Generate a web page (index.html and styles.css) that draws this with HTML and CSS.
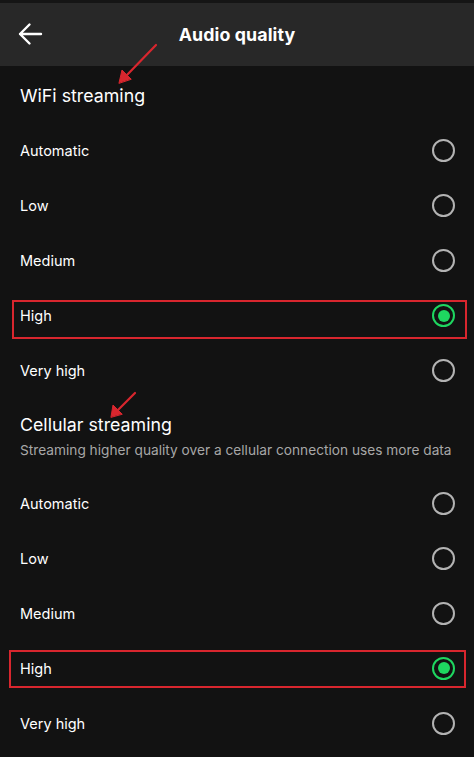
FILE: index.html
```html
<!DOCTYPE html>
<html lang="en">
<head>
  <meta charset="UTF-8">
  <meta name="viewport" content="width=device-width, initial-scale=1.0">
  <title>Audio quality</title>
  <link rel="stylesheet" href="styles.css">
</head>
<body>
  <div class="screen">
    <header class="topbar">
      <button class="back" aria-label="Back">
        <svg width="26" height="26" viewBox="0 0 26 26">
          <path d="M24 13H3M12.5 3.5L3 13l9.5 9.5" fill="none" stroke="#fff" stroke-width="2.4" stroke-linecap="round" stroke-linejoin="round"/>
        </svg>
      </button>
      <h1>Audio quality</h1>
    </header>

    <section class="group">
      <div class="group-head wifi">
        <h2>WiFi streaming</h2>
      </div>
      <div class="option"><span>Automatic</span><i class="radio"></i></div>
      <div class="option"><span>Low</span><i class="radio"></i></div>
      <div class="option"><span>Medium</span><i class="radio"></i></div>
      <div class="option"><span>High</span><i class="radio on"></i></div>
      <div class="option"><span>Very high</span><i class="radio"></i></div>
    </section>

    <section class="group">
      <div class="group-head cell">
        <h2>Cellular streaming</h2>
        <p>Streaming higher quality over a cellular connection uses more data</p>
      </div>
      <div class="option"><span>Automatic</span><i class="radio"></i></div>
      <div class="option"><span>Low</span><i class="radio"></i></div>
      <div class="option"><span>Medium</span><i class="radio"></i></div>
      <div class="option"><span>High</span><i class="radio on"></i></div>
      <div class="option"><span>Very high</span><i class="radio"></i></div>
    </section>

    <!-- annotation marks drawn over the screenshot -->
    <div class="mark box-wifi"></div>
    <div class="mark box-cell"></div>
    <svg class="arrows" width="474" height="757" viewBox="0 0 474 757">
      <g stroke="#d8262e" stroke-width="2.2" fill="#d8262e" stroke-linecap="round">
        <line x1="156" y1="45" x2="126" y2="76"/>
        <polygon points="119,83 122,70 131,79" stroke-width="1"/>
        <line x1="135" y1="393" x2="117" y2="411"/>
        <polygon points="111,417 113,405 122,414" stroke-width="1"/>
      </g>
    </svg>
  </div>
</body>
</html>
```

FILE: styles.css
```css
:root {
  --bg: #121212;
  --bar: #282828;
  --text: #ffffff;
  --muted: #a7a7a7;
  --ring: #b3b3b3;
  --green: #1ed760;
  --mark: #d8262e;
}

* {
  box-sizing: border-box;
}

body {
  margin: 0;
  background: var(--bg);
  font-family: Inter, 'Noto Sans', sans-serif;
  color: var(--text);
}

.screen {
  position: relative;
  width: 474px;
  height: 757px;
  overflow: hidden;
  border-top: 3px solid #151515;
}

.topbar {
  height: 63px;
  background: var(--bar);
  display: flex;
  align-items: center;
  justify-content: center;
  position: relative;
}

.back {
  position: absolute;
  left: 17px;
  top: 18px;
  background: none;
  border: none;
  padding: 0;
  width: 26px;
  height: 26px;
}

.topbar h1 {
  margin: 0;
  font-size: 17.8px;
  font-weight: 700;
  letter-spacing: 0.1px;
  line-height: 24px;
}

.group-head h2 {
  margin: 0;
  font-size: 17.8px;
  font-weight: 400;
  line-height: 24px;
}

.group-head.wifi {
  padding: 18px 20px 15px;
}

.group-head.cell {
  padding: 15px 8px 15.5px 20px;
}

.group-head p {
  margin: 3px 0 0;
  font-size: 13.7px;
  line-height: 20px;
  color: var(--muted);
  white-space: nowrap;
}

.option {
  height: 55px;
  display: flex;
  align-items: center;
  justify-content: space-between;
  padding: 0 19px 0 20px;
  font-size: 14.5px;
}

.radio {
  width: 23px;
  height: 23px;
  border-radius: 50%;
  border: 2px solid var(--ring);
  display: flex;
  align-items: center;
  justify-content: center;
}

.radio.on {
  border-color: var(--green);
}

.radio.on::after {
  content: "";
  width: 12px;
  height: 12px;
  border-radius: 50%;
  background: var(--green);
}

.mark {
  position: absolute;
  border: 2px solid var(--mark);
}

.box-wifi {
  left: 12px;
  top: 297px;
  width: 455px;
  height: 39px;
}

.box-cell {
  left: 9px;
  top: 647px;
  width: 457px;
  height: 38px;
}

.arrows {
  position: absolute;
  left: 0;
  top: -3px;
  pointer-events: none;
}
```
